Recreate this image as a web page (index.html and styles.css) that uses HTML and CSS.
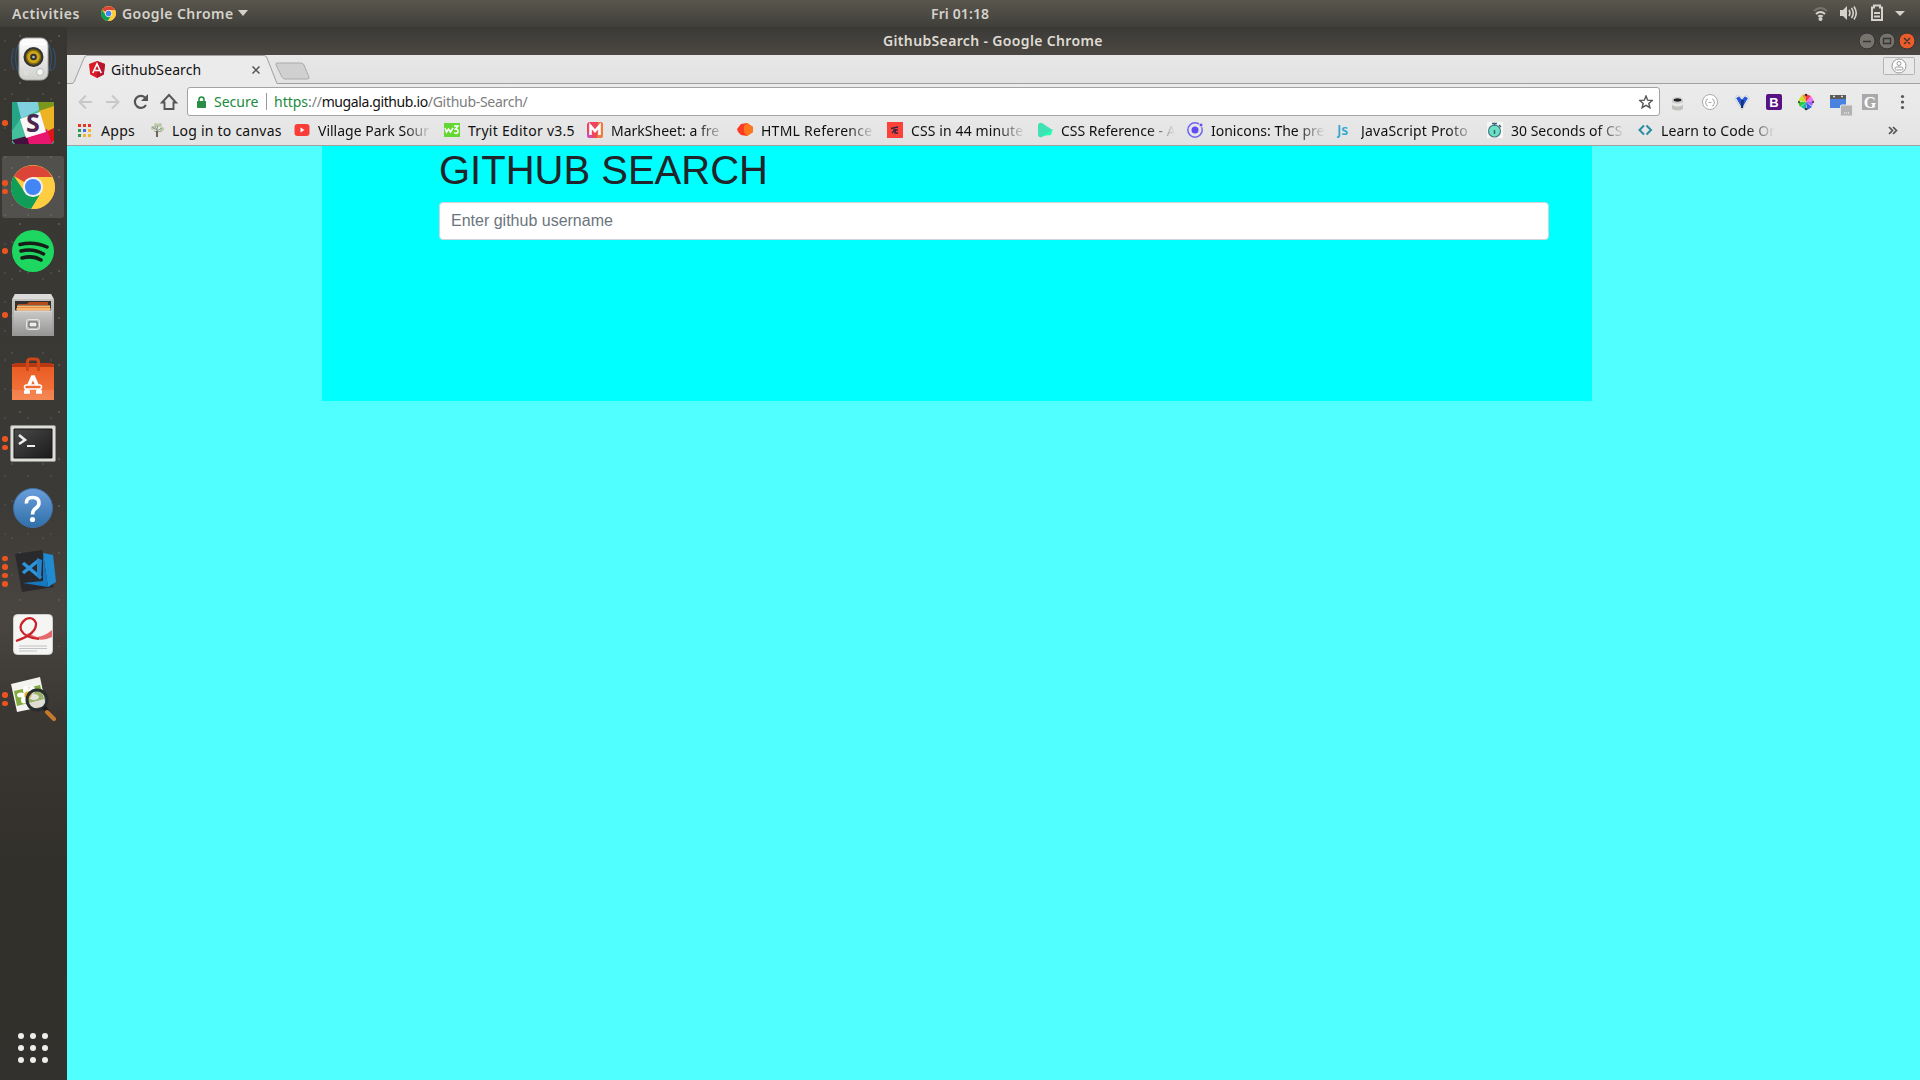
FILE: index.html
```html
<!DOCTYPE html>
<html lang="en">
<head>
<meta charset="utf-8">
<title>GithubSearch</title>
<link rel="stylesheet" href="styles.css">
</head>
<body>
<svg class="defs" aria-hidden="true">
  <defs>
    <linearGradient id="white" x2="0" y2="1"><stop stop-color="#fff"/><stop offset="1" stop-color="#cfcfcc"/></linearGradient>
    <linearGradient id="steel" x2="0" y2="1"><stop stop-color="#c9c9c7"/><stop offset="1" stop-color="#969694"/></linearGradient>
    <linearGradient id="bag" x2="0" y2="1"><stop stop-color="#e95a22"/><stop offset="1" stop-color="#f4793f"/></linearGradient>
    <linearGradient id="blue" x2="0" y2="1"><stop stop-color="#6b9fdb"/><stop offset="1" stop-color="#2f6fa8"/></linearGradient>
    <linearGradient id="screen" x2="1" y2="1"><stop stop-color="#4a4a4a"/><stop offset="1" stop-color="#1b1b1b"/></linearGradient>
    <symbol id="chrome" viewBox="0 0 48 48">
      <circle cx="24" cy="24" r="24" fill="#ffcd40"/>
      <path d="M24 24 3.2 12A24 24 0 0 1 44.8 13H24z" fill="#db4437"/>
      <path d="M3.2 12A24 24 0 0 0 22 47.9L33.5 29 24 35 14.500 29z" fill="#0f9d58"/>
      <path d="M24 13H45A24 24 0 0 1 22 48L33.500 29.500z" fill="#ffcd40"/>
      <circle cx="24" cy="24" r="11" fill="#f1f1f1"/><circle cx="24" cy="24" r="8.800" fill="#4285f4"/>
    </symbol>
  </defs>
</svg>

<header class="topbar">
  <span class="activities">Activities</span>
  <svg class="app-icon" width="15" height="15"><use href="#chrome"/></svg>
  <span class="app-name">Google Chrome</span>
  <svg width="10" height="6"><path d="M0 0h10L5 6z" fill="#d5d2cb"/></svg>
  <span class="clock">Fri 01:18</span>
  <svg class="status" width="92" height="18" viewBox="0 0 92 18">
    <g fill="none" stroke-width="2"><path d="M1 7q6.500-6 13 0" stroke="#77746d"/><path d="M3 10q4.500-4 9 0M5.200 12.500q2.300-1.500 4.600 0" stroke="#d5d2cb"/></g>
    <circle cx="7.500" cy="15" r="2" fill="#d5d2cb"/>
    <path d="M27 6h3l4-4v14l-4-4h-3z" fill="#d5d2cb"/>
    <path d="M36 6q2 3 0 6M38.500 4q3.500 5 0 10M41 2.500q4.500 6.500 0 13" fill="none" stroke="#d5d2cb" stroke-width="1.600"/>
    <path d="M61 3.500h-2V16h10V3.500h-2V1.500h-6v2z" fill="none" stroke="#d5d2cb" stroke-width="2"/><path d="M61 9h6M61 12.500h6" stroke="#d5d2cb" stroke-width="1.800"/>
    <path d="M82 7h10l-5 5z" fill="#d5d2cb"/>
  </svg>
</header>

<div class="desktop">
<nav class="dock">
  <div class="launcher">
    <svg width="48" height="48" viewBox="0 0 48 48"><path d="M5 13q-5 12 0 22M9 10q-5 13 0 26M44 13q5 12 0 22M40 10q5 13 0 26" fill="none" stroke="#344d69" stroke-width="1.500"/><rect x="10" y="3" width="29" height="42" rx="7" fill="url(#white)" stroke="#aaa"/><path d="M13 9h23" stroke="#fff" stroke-width="2"/><circle cx="24.500" cy="22" r="10" fill="#343434"/><circle cx="24.500" cy="22" r="7" fill="#cca617" stroke="#80680b" stroke-width="1.500"/><circle cx="24.500" cy="22" r="3.300" fill="#333"/><circle cx="24.500" cy="22" r="1.300" fill="#bbb"/><circle cx="31" cy="37" r="3.500" fill="#f5f5f5" stroke="#bbb"/><path d="M15 36h4v4h-4z" fill="#ddd"/></svg>
  </div>
  <div class="launcher"><span class="pips"><i></i></span>
    <svg width="42" height="42" viewBox="0 0 42 42"><rect width="42" height="42" rx="3" fill="#44bf9b"/><path d="M4 0h22l1 8L8 17 0 24V0z" fill="#7fd1df"/><path d="M0 0h5l4 16-9 13z" fill="#25a486"/><path d="M26 0h16v5l-14 6z" fill="#7a961d"/><path d="M27 9 42 4v22l-10 5z" fill="#ecb424"/><path d="m34 30 8-4v13l-3 3h-5z" fill="#dc1519"/><path d="m15 34 20-7 5 15H15z" fill="#e8166f"/><path d="m0 38 15-4 2 8H3z" fill="#46103e"/><path d="m8 17 20-7 6 20-20 6z" fill="#faf7fa"/><text x="21" y="30" text-anchor="middle" class="slack-s">S</text></svg>
  </div>
  <div class="launcher active"><span class="pips"><i></i><i></i></span>
    <svg width="44" height="44"><use href="#chrome"/></svg>
  </div>
  <div class="launcher"><span class="pips"><i></i></span>
    <svg width="42" height="42" viewBox="0 0 42 42"><circle cx="21" cy="21" r="21" fill="#1ed760"/><path d="M8 14.500q14-3.500 27 2.500M9 21q12-3 22.500 3M10 28q11-3 19 2" fill="none" stroke="#171d19" stroke-width="3.500" stroke-linecap="round"/></svg>
  </div>
  <div class="launcher"><span class="pips"><i></i></span>
    <svg width="42" height="44" viewBox="0 0 42 44"><path d="M3 1h36l3 5v37H0V6z" fill="url(#steel)"/><path d="M1 6 3 1h36l2 5z" fill="#dbdbd9"/><path d="M3 8h36v11H3z" fill="#33302d"/><path d="M6 11h9l2-2h19v3H6z" fill="#b64b1c"/><path d="M5 13h33v6H5z" fill="#eb8d3b"/><path d="M5 13h33M4 16h35" stroke="#ffe1a7"/><path d="M2 18h38v24H2z" fill="url(#steel)"/><path d="M2 18h38" stroke="#ddd"/><rect x="14.500" y="26.500" width="13" height="10" rx="2" fill="#bcbcba" stroke="#e5e5e5"/><path d="M17 29h8v5h-8z" fill="#eee" stroke="#555"/></svg>
  </div>
  <div class="launcher">
    <svg width="42" height="44" viewBox="0 0 42 44"><path d="M0 7h42v36H0z" fill="url(#bag)"/><path d="M0 10V8l3-2h36l3 2v2z" fill="#b83911"/><path d="M15.500 14V5q0-3 3-3h5q3 0 3 3v9" fill="none" stroke="#cd4717" stroke-width="3"/><path d="M0 33h42v10H0z" fill="#fff" opacity=".1"/><path d="M12 35h6M24 35h6M14 35l6.500-15h1L28 35" fill="none" stroke="#fff" stroke-width="3.600"/><rect x="12.500" y="28" width="17" height="4" rx="2" fill="#ee6b31" stroke="#fff" stroke-width="1.500"/></svg>
  </div>
  <div class="launcher"><span class="pips"><i></i><i></i></span>
    <svg class="lower" width="46" height="38" viewBox="0 0 46 38"><rect x=".5" y=".5" width="45" height="36" rx="1.500" fill="#deded9" stroke="#92918e"/><path d="M4 4h38v29H4z" fill="url(#screen)" stroke="#161616"/><path d="m9 10 6 5-6 4" fill="none" stroke="#eee" stroke-width="2.600"/><path d="M17 21h8" stroke="#eee" stroke-width="2"/></svg>
  </div>
  <div class="launcher">
    <svg class="lower" width="40" height="40" viewBox="0 0 40 40"><circle cx="20" cy="20" r="19.500" fill="url(#blue)" stroke="#3e72a7"/><path d="M13.500 15.500Q13 9.500 19.500 9.500q6.500 0 6.500 5.500 0 3-3.500 5.500-3 2-3 6" fill="none" stroke="#fff" stroke-width="3.600"/><circle cx="19.500" cy="31.500" r="2.600" fill="#fff"/></svg>
  </div>
  <div class="launcher"><span class="pips"><i></i><i></i><i></i><i></i></span>
    <svg class="nudge" width="42" height="42" viewBox="0 0 42 42"><path d="m0 4 27-4 12 37-32 5z" fill="#2a2a2c"/><path d="M28 3 38 5l3 27-8 5z" fill="#218bd0"/><path d="m28 3 5 34-25-4 20-2z" fill="#1678be"/><path d="m8 13 18 15M24 10 8 23" stroke="#2a94dc" stroke-width="3.500"/><path d="m22 8 5 2-1 19-4-2z" fill="#2584c9"/></svg>
  </div>
  <div class="launcher">
    <svg width="40" height="42" viewBox="0 0 40 42"><rect x=".5" y=".5" width="39" height="40" rx="4" fill="#f5f5f4" stroke="#d0cfcc"/><path d="M24 23q8-1 15-7v7q-8 4-15 2-6-1-10-6z" fill="#e36a6c"/><path d="M3 27Q24 20 23 9 20 2 13 5 6 10 8 16q4 8 18 9" fill="none" stroke="#cb2229" stroke-width="2.200"/><path d="M6 32h28M6 34.500h28M6 37h18" stroke="#c2c2c2"/></svg>
  </div>
  <div class="launcher"><span class="pips"><i></i><i></i></span>
    <svg width="46" height="46" viewBox="0 0 46 46"><path d="M1 8 30 1l6 29-29 6z" fill="#f3f3ef"/><path d="m4 15 26-6 4 14-27 7z" fill="#82aa3c"/><g fill="#fff"><ellipse cx="16" cy="14" rx="3" ry="4"/><ellipse cx="22" cy="14" rx="3" ry="4"/><ellipse cx="11" cy="19" rx="4" ry="2.500"/><ellipse cx="24" cy="21" rx="5" ry="3"/><ellipse cx="14" cy="24" rx="3" ry="3.500"/></g><circle cx="18" cy="19" r="3.500" fill="#edad21"/><circle cx="27" cy="24" r="10" fill="#bcbcab" fill-opacity=".4" stroke="#282d2e" stroke-width="3"/><path d="m34 31 4 5" stroke="#1c1c1c" stroke-width="4"/><path d="m37 36 7 7" stroke="#c87a2c" stroke-width="4" stroke-linecap="round"/></svg>
  </div>
  <div class="all-apps"><i></i><i></i><i></i><i></i><i></i><i></i><i></i><i></i><i></i></div>
</nav>

<main class="window">
  <div class="titlebar">
    <span class="title">GithubSearch - Google Chrome</span>
    <svg class="controls" width="58" height="18" viewBox="0 0 58 18"><g stroke="#33322e"><circle cx="9" cy="9" r="8" fill="#75736c"/><circle cx="29" cy="9" r="8" fill="#75736c"/><circle cx="49" cy="9" r="8" fill="#ec5b2b"/></g><path d="M5 9.500h8M25.500 6.500h7v5h-7zM46 6l6 6M52 6l-6 6" fill="none" stroke="#363530" stroke-width="1.300"/></svg>
  </div>

  <div class="tabstrip">
    <div class="tab">
      <svg class="tab-shape" width="212" height="30" viewBox="0 0 212 30"><path d="M0 28.500H5Q6.500 28.500 7.500 26L17 3Q18 .5 20 .5H197Q199 .5 200 3L210 28.500H212V30H0z" fill="#ebebeb"/><path d="M0 28.500H5Q6.500 28.500 7.500 26L17 3Q18 .5 20 .5H197Q199 .5 200 3L210 28.500H212" fill="none" stroke="#a0a0a0"/></svg>
      <svg class="tab-icon" width="16" height="17" viewBox="0 0 16 17"><path d="m8 0 8 3-1.200 10.500L8 17l-6.800-3.500L0 3z" fill="#dd1b26"/><path d="m8 0 8 3-1.200 10.500L8 17z" fill="#b9162b"/><path d="M3.800 12 8 3l4.200 9M5.800 9.500h4.500" fill="none" stroke="#fff" stroke-width="1.600"/></svg>
      <span class="tab-title">GithubSearch</span>
      <svg class="tab-close" width="8" height="8"><path d="m.5.5 7 7m0-7-7 7" stroke="#555" stroke-width="1.500"/></svg>
    </div>
    <svg class="new-tab" width="35" height="18" viewBox="0 0 35 18"><path d="M2 1h24q2 0 3 2l5 12q.5 2-1.500 2H10q-2 0-3-2L1 3Q.5 1 2 1z" fill="#d0d0d0" stroke="#aaa"/></svg>
    <svg class="profile" width="32" height="18" viewBox="0 0 32 18"><rect x=".5" y=".5" width="31" height="17" rx="1" fill="#e9e9e9" stroke="#b5b5b5"/><g fill="#fff" stroke="#999"><circle cx="16" cy="9" r="7"/><circle cx="16" cy="6.500" r="2"/><rect x="12" y="10" width="8" height="3" rx="1.500"/></g></svg>
  </div>

  <div class="toolbar">
    <svg class="nav-icons" width="100" height="18" viewBox="0 0 100 18"><path d="M14 9H2M8 2.500 1.500 9 8 15.500M28 9h12M34 2.500 40.500 9 34 15.500" fill="none" stroke="#c8c8c8" stroke-width="2"/><path d="M67 4.500A6 6 0 1 0 68 12" fill="none" stroke="#555" stroke-width="2.200"/><path d="M70 1v7h-7z" fill="#555"/><path d="M84 9.500 91 2l7 7.500h-2.500V16h-9V9.500z" fill="none" stroke="#555" stroke-width="1.900"/></svg>
    <div class="omnibox">
      <svg width="9" height="12" viewBox="0 0 9 12"><path d="M2 5V3.500q0-2.500 2.500-2.500T7 3.500V5" fill="none" stroke="#1e8e3e" stroke-width="1.500"/><rect y="5" width="9" height="7" rx=".7" fill="#2b8c45"/></svg>
      <span class="secure">Secure</span>
      <span class="url"><span class="scheme">https</span><span class="slashes">://</span><span class="host">mugala.github.io</span><span class="path">/Github-Search/</span></span>
      <svg class="star" width="14" height="14" viewBox="0 0 14 14"><path d="m7 1 1.700 4.200 4.500.3-3.400 2.900 1.100 4.300L7 10.300l-3.900 2.400 1.100-4.300L.8 5.500l4.500-.3z" fill="none" stroke="#555" stroke-width="1.400"/></svg>
    </div>
    <svg class="extensions" width="240" height="30" viewBox="0 0 240 30">
      <path d="M4 14h11v8q-5 3-11 0z" fill="#c0c0bb"/><path d="M4 15q5 3 11 0v3q-5 3-11 0z" fill="#e8e8e4"/><ellipse cx="9.500" cy="13" rx="5" ry="2.500" fill="#f5f5f5" stroke="#ccc"/><ellipse cx="9.500" cy="13" rx="4" ry="1.700" fill="#222"/>
      <circle cx="42" cy="15" r="7.500" fill="#fff" stroke="#aaa"/><path d="M40 12q-2 0-2 2v1l-1 .5 1 .5v1q0 2 2 2M44 12q2 0 2 2v1l1 .5-1 .5v1q0 2-2 2M40.500 15.500h3" fill="none" stroke="#aaa"/>
      <path d="M67 12q0-4 4-3l3 2 3-2q4-1 4 3l-4 6-3 5-3-5z" fill="#fff" stroke="#ccc"/><path d="m68 11 3-1.500 3 3 3-3 3 1.500-6 10z" fill="#2455db"/><path d="M73 13h3l-1 8h-2z" fill="#123477"/>
      <rect x="98" y="7" width="16" height="16" rx="2" fill="#571384"/><text x="106" y="20" text-anchor="middle" class="b-letter">B</text>
      <path d="M138 15 134 8l4-1z" fill="#ff8a3d"/><path d="M138 15V7l5 2z" fill="#f33c48"/><path d="m138 15 5-6 3 5z" fill="#f273e7"/><path d="m138 15 8-1-2 5z" fill="#ab62ff"/><path d="m138 15 6 5-5 3z" fill="#3263e5"/><path d="M138 15v8l-5-3z" fill="#20b8a2"/><path d="m138 15-6 5-2-5z" fill="#2aca35"/><path d="m138 15-8-1 4-6z" fill="#c2df29"/><g fill="#333"><circle cx="138" cy="8" r="1.200"/><circle cx="138" cy="22" r="1.200"/><circle cx="131" cy="15" r="1"/><circle cx="145" cy="15" r="1"/></g>
      <path d="M162 8h16v13h-16z" fill="#4a82df"/><path d="M162 8h16v4h-16z" fill="#5a5a5a"/><path d="M165 9.500h2M173 9.500h2" stroke="#ddd" stroke-width="1.500"/><rect x="172.500" y="18" width="12" height="11" rx="1" fill="#b3b3b3" stroke="#e5e5e5"/><path d="M176 26h6" stroke="#fff" stroke-dasharray="1"/>
      <path d="M194 7h16v16h-16z" fill="#a9a9a9"/><text x="202" y="20.500" text-anchor="middle" class="g-letter">G</text>
      <g fill="#555"><circle cx="234.500" cy="9.500" r="1.600"/><circle cx="234.500" cy="15" r="1.600"/><circle cx="234.500" cy="20.500" r="1.600"/></g>
    </svg>
  </div>

  <div class="bookmarks">
    <a class="bm apps"><svg width="13" height="13" viewBox="0 0 13 13"><path d="M0 1.500h13" stroke="#ea3323" stroke-width="3" stroke-dasharray="3 2"/><path d="M0 6.500h3" stroke="#2c9a50" stroke-width="3"/><path d="M5 6.500h3" stroke="#436be0" stroke-width="3"/><path d="M10 6.500h3" stroke="#f6b330" stroke-width="3"/><path d="M0 11.500h3" stroke="#2c9a50" stroke-width="3"/><path d="M5 11.500h8" stroke="#f6b330" stroke-width="3" stroke-dasharray="3 2"/></svg><span>Apps</span></a>
    <a class="bm canvas"><svg width="14" height="16" viewBox="0 0 14 16"><g fill="#bccaa9"><circle cx="3" cy="6" r="2"/><circle cx="6" cy="3" r="2"/><circle cx="10" cy="3" r="2"/><circle cx="12" cy="7" r="2"/></g><path d="M7 15V8L2 5M7 9l5-3M7 8l1-5M4 9l3 1 5-1M5 4l2 4" fill="none" stroke="#828a73" stroke-width=".8"/><path d="M7 15V9" stroke="#6c6455" stroke-width="2"/></svg><span>Log in to canvas</span></a>
    <a class="bm village"><svg width="16" height="16"><rect x=".5" y="2" width="15" height="12" rx="3" fill="#f83c37"/><path d="m6.500 5.500 4 2.500-4 2.500z" fill="#fff"/></svg><span class="fade">Village Park Sour</span></a>
    <a class="bm tryit"><svg width="16" height="16"><path d="M0 1h16v14H0z" fill="#65d732"/><path d="m1 6 1.500 4L4.500 7l2 3L9 6M10 4h4l-2.500 3q3 0 2.500 3-1.500 2.500-4 .5" fill="none" stroke="#fff" stroke-width="1.500"/></svg><span>Tryit Editor v3.5</span></a>
    <a class="bm long"><svg width="16" height="16"><rect width="16" height="16" rx="3" fill="#ef4560"/><path d="M11 0h2q3 0 3 3v10q0 3-3 3h-3z" fill="#ee7b3b"/><path d="M0 10v3q0 3 3 3h3z" fill="#d14abc"/><path d="M3.500 13V4L8 9l4.500-5v9" fill="none" stroke="#fff" stroke-width="2.600"/></svg><span class="fade">MarkSheet: a fre</span></a>
    <a class="bm long"><svg width="16" height="16"><path d="m0 7 4-5 6-1 6 4v5l-6 4-6-1-3-3z" fill="#ff3a24"/><path d="m7 4 3-3 6 4v5l-6 4-3-4z" fill="#ff761c"/></svg><span class="fade html-ref">HTML Reference</span></a>
    <a class="bm long"><svg width="16" height="16"><path d="M0 0h16v16H0z" fill="#ff4239"/><path d="M4 6.500 11 5M7 6v3L5 11M9 5.500 8 11h3M7 8.500l4-.7" fill="none" stroke="#332244" stroke-width="1.300"/></svg><span class="fade css44">CSS in 44 minute</span></a>
    <a class="bm long"><svg width="16" height="16"><path d="M1 3q1-3 4-2l9 6q2 1 0 3l-9 5q-4 1-4-3z" fill="#3fe2b2"/><path d="m6 14 10-7-2 6z" fill="#29ffb0"/></svg><span class="fade">CSS Reference - A</span></a>
    <a class="bm long"><svg width="16" height="16"><circle cx="8" cy="8" r="7.200" fill="none" stroke="#6f61f5" stroke-width="1.500"/><circle cx="8" cy="8" r="3.500" fill="#5f4cf3"/><circle cx="14" cy="3" r="2" fill="#6350f4" stroke="#e5e5e5"/></svg><span class="fade">Ionicons: The pre</span></a>
    <a class="bm long"><svg width="16" height="16"><text x="0" y="13" class="js-letters">Js</text></svg><span class="fade js-proto">JavaScript Proto</span></a>
    <a class="bm long"><svg width="16" height="16"><path d="M0 0h16v16H0z" fill="#f5f8f7"/><circle cx="7.500" cy="9" r="6" fill="#69e3c4" stroke="#507988" stroke-width="1.200"/><path d="M5 1.500h5M7.500 1v3M12 3l2 2M7.500 8v4" stroke="#396277" stroke-width="1.500"/></svg><span class="fade">30 Seconds of CS</span></a>
    <a class="bm long"><svg width="16" height="16"><path d="M7 3.500 2.500 8 7 12.500M9.500 3.500 14 8l-4.500 4.500" fill="none" stroke="#278da1" stroke-width="2"/></svg><span class="fade learn">Learn to Code Or</span></a>
    <svg class="more" width="10" height="9" viewBox="0 0 10 9"><path d="m1 1 3.500 3.500L1 8m4-7 3.500 3.500L5 8" fill="none" stroke="#555" stroke-width="1.700"/></svg>
  </div>

  <section class="page">
    <div class="search-panel">
      <h1>GITHUB SEARCH</h1>
      <input type="text" placeholder="Enter github username" aria-label="Github username">
    </div>
  </section>
</main>
</div>
</body>
</html>
```
FILE: styles.css
```css
* { box-sizing: border-box; }
body { margin: 0; width: 1920px; height: 1080px; overflow: hidden; font: 14px "Noto Sans", "Open Sans", sans-serif; color: #111; }
svg { display: block; flex: none; }
.defs { position: absolute; width: 0; height: 0; }
span { white-space: nowrap; }

.topbar { height: 27px; display: flex; align-items: center; padding: 0 15px 1px 12px; background: linear-gradient(#59564d, #403f3a); color: #d5d2cb; font-weight: 600; position: relative; }
.activities { width: 89px; letter-spacing: .55px; }
.app-icon { margin-right: 6px; }
.app-name { width: 116px; letter-spacing: .43px; }
.clock { position: absolute; left: 931px; letter-spacing: .12px; }
.status { margin-left: auto; }

.desktop { display: flex; height: 1053px; }
.dock { width: 67px; flex: none; display: flex; flex-direction: column; position: relative; background: linear-gradient(#373631, #3c3a36 45%, #494541 56%, #3b3732 65%, #32302b 80%, #32312d); }
.dock::before {
  content: ""; position: absolute; inset: 0 0 auto; height: 620px;
  background:
    radial-gradient(circle at 20px 9px, #56544f 0 .7px, transparent 1.300px) 0 0 / 39px 47px,
    radial-gradient(circle at 12px 30px, #4d4b47 0 .7px, transparent 1.300px) 0 0 / 31px 37px,
    radial-gradient(circle at 5px 14px, #4a4844 0 .7px, transparent 1.300px) 0 0 / 23px 29px;
}
.launcher { height: 64px; display: flex; align-items: center; justify-content: center; position: relative; }
.launcher.active::before { content: ""; position: absolute; inset: 1px 3px 1px 2px; border-radius: 3px; background: rgba(255,255,255,.13); }
.launcher svg { position: relative; left: -.5px; }
.launcher .nudge { left: 2px; }
.launcher .lower { top: 1px; }
.pips { position: absolute; left: 2px; top: 0; height: 64px; display: flex; flex-direction: column; justify-content: center; gap: 3px; z-index: 1; }
.pips i { width: 5.500px; height: 5.500px; border-radius: 50%; background: #e95420; }
.all-apps { margin: auto auto 17px 18px; display: grid; grid-template-columns: repeat(3, 6px); gap: 6px; }
.all-apps i { width: 6px; height: 6px; border-radius: 50%; background: #eeeeec; }
.slack-s { font: 700 25px "Noto Sans", sans-serif; fill: #4d2650; }

.window { flex: 1; display: flex; flex-direction: column; min-width: 0; }
.titlebar { height: 28px; flex: none; background: linear-gradient(#3b3a36, #4b4843); color: #dfdbd2; font-weight: 600; display: flex; align-items: center; justify-content: flex-end; padding: 0 4px 1px 0; position: relative; }
.title { position: absolute; left: 816px; letter-spacing: .35px; }

.tabstrip { height: 29px; flex: none; background: linear-gradient(#e7e7e7, #e2e2e2); box-shadow: inset 0 -1px #a0a0a0; display: flex; }
.tab { width: 208px; height: 29px; display: flex; align-items: center; padding-left: 22px; position: relative; }
.tab > * { position: relative; }
.tab .tab-shape { position: absolute; left: 0; top: 0; }
.tab-icon { margin-right: 6px; }
.tab-title { width: 141px; letter-spacing: .1px; }
.new-tab { margin-top: 7px; }
.profile { margin: 2px 5px 0 auto; }

.toolbar { height: 33px; flex: none; background: linear-gradient(#ebebeb, #e8e8e8); display: flex; align-items: center; padding: 2px 11px 0 11px; }
.nav-icons { margin-right: 9px; }
.omnibox { width: 1473px; height: 29px; background: #fff; border: 1px solid #a3a3a3; border-radius: 3px; display: flex; align-items: center; padding: 0 6px 0 9px; }
.secure { color: #1b8a3c; width: 53px; margin-left: 8px; border-right: 1px solid #999; line-height: 17px; }
.url { margin-left: 7px; }
.scheme { color: #1b8a3c; }
.slashes, .path { color: #7d7d7d; }
.slashes { letter-spacing: -.2px; }
.host { letter-spacing: -.4px; }
.path { letter-spacing: -.28px; }
.star { margin-left: auto; }
.extensions { margin-left: 8px; }
.b-letter { font: 700 13px "Liberation Sans", sans-serif; fill: #fff; }
.g-letter { font: 700 16px "Liberation Serif", serif; fill: #fff; }

.bookmarks { height: 29px; flex: none; background: linear-gradient(#e8e8e8, #e3e3e3); border-bottom: 1px solid #a0a0a0; display: flex; align-items: center; padding: 0 22px 2px 11px; }
.bm { display: flex; align-items: center; gap: 8px; height: 26px; flex: none; }
.fade { width: 114px; -webkit-mask-image: linear-gradient(90deg, #000 76%, transparent 100%); mask-image: linear-gradient(90deg, #000 76%, transparent 100%); }
.apps { width: 72px; gap: 10px; letter-spacing: .3px; }
.canvas { width: 144px; letter-spacing: .23px; }
.village { width: 150px; }
.tryit { width: 143px; letter-spacing: .28px; }
.long { width: 150px; }
.html-ref { letter-spacing: .25px; }
.css44 { letter-spacing: .12px; }
.js-proto { letter-spacing: .2px; }
.learn { letter-spacing: .1px; }
.js-letters { font: 600 14px "Noto Sans", sans-serif; fill: #2fa9cf; }
.more { margin-left: auto; }

.page { flex: 1; background: #50ffff; padding-left: 255px; }
.search-panel { width: 1270px; height: 255px; background: #0ff; padding: 0 43px 0 117px; font-family: "Liberation Sans", Arial, sans-serif; }
.search-panel h1 { margin: 0 0 8px; font-size: 40px; line-height: 48px; font-weight: 400; color: #212529; }
.search-panel input { display: block; width: 100%; height: 38px; padding: 6px 12px 6px 11px; border: 1px solid #ced4da; border-radius: 4px; font: 16px/24px "Liberation Sans", Arial, sans-serif; }
.search-panel input::placeholder { color: #6c757d; opacity: 1; }
```
